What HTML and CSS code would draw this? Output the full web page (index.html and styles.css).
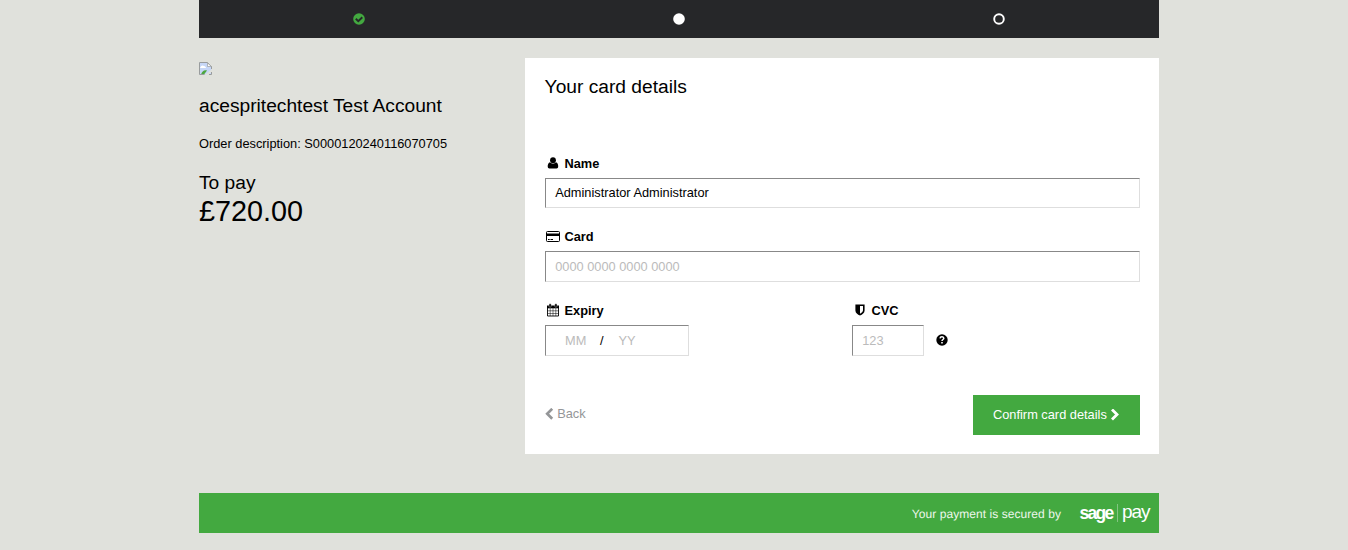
FILE: index.html
```html
<!DOCTYPE html>
<html lang="en">
<head>
<meta charset="utf-8">
<title>Your card details</title>
<link rel="stylesheet" href="styles.css">
</head>
<body>
<div class="page">
  <header class="steps">
    <div class="step"><svg class="dot" viewBox="0 0 12 12"><circle cx="6" cy="6" r="5.8" fill="#43a940"/><path d="M2.800 5.700 5.300 8.100 9.300 4.200" fill="none" stroke="#262729" stroke-width="1.9"/></svg></div>
    <div class="step"><svg class="dot" viewBox="0 0 12 12"><circle cx="6" cy="6" r="5.8" fill="#fff"/></svg></div>
    <div class="step"><svg class="dot" viewBox="0 0 12 12"><circle cx="6" cy="6" r="4.8" fill="none" stroke="#fff" stroke-width="1.9"/></svg></div>
  </header>
  <main class="content">
    <section class="order">
      <svg class="logo" viewBox="0 0 13 13"><path d="M.5 12.500V.5h8l4 4v8z" fill="#c6d6f6"/><path d="M1 6c1-3 3-3 4-2 1 0 2 1 2 2z" fill="#fff"/><path d="M2 12.500c1-3 3-5 6-4l-3 4z" fill="#4da63f"/><path d="M6 13 13 7V9.500l-3.500 3.500z" fill="#e0e1dc"/><path d="M.5 12.500V.5h8l4 4v2.500M.5 12.500h5M10 12.500h2.500v-2.500" fill="none" stroke="#999c9d"/><path d="M8.500 1v3.500h4z" fill="#fff" stroke="#999c9d" stroke-width=".7"/></svg>
      <h2 class="merchant">acespritechtest Test Account</h2>
      <p class="description">Order description: S0000120240116070705</p>
      <div class="pay-label">To pay</div>
      <div class="amount">£720.00</div>
    </section>
    <form class="card">
      <h1 class="title">Your card details</h1>
      <div class="field field-name">
        <label class="label"><svg class="icon" viewBox="0 0 16 14"><circle cx="8" cy="4.200" r="2.900"/><path d="M5 6.200C3.500 6.500 2.700 8.500 2.700 10.300c0 1.500.8 2.200 1.700 2.200h7.100c1 0 1.700-.7 1.700-2.200 0-1.800-.6-3.800-2.300-4.100C9.500 8 6.500 8 5 6.200z"/></svg>Name</label>
        <div class="input">Administrator Administrator</div>
      </div>
      <div class="field">
        <label class="label"><svg class="icon" viewBox="0 0 16 14"><rect x="1.500" y="2.500" width="13" height="10" rx=".9" fill="none" stroke="#000"/><path d="M1.500 4.500h13v2.500h-13z"/><path d="M3 10.500h1.700M5.500 10.500h2.500" stroke="#000"/></svg>Card</label>
        <div class="input input-number placeholder">0000 0000 0000 0000</div>
      </div>
      <div class="field-row">
        <div class="field">
          <label class="label"><svg class="icon" viewBox="0 0 16 14"><path d="M2 2.500h12v2.800H2z"/><path d="M2.500 3.500h11v9.500h-11z" fill="none" stroke="#000" stroke-width=".9"/><path d="M5.200 5v8M8 5v8M10.800 5v8M2.500 7.800h11M2.500 10.500h11" fill="none" stroke="#000" stroke-width=".5"/><rect x="4" y=".8" width="2.200" height="3.400" rx=".9" stroke="#fff" stroke-width=".35"/><rect x="9.800" y=".8" width="2.200" height="3.400" rx=".9" stroke="#fff" stroke-width=".35"/></svg>Expiry</label>
          <div class="input input-expiry"><span class="month placeholder">MM</span><span>/</span><span class="year placeholder">YY</span></div>
        </div>
        <div class="field">
          <label class="label"><svg class="icon" viewBox="0 0 16 14"><path fill-rule="evenodd" d="M3.400 1.400h9.200v6c0 2.400-2.200 4.100-4.600 5.200-2.400-1.100-4.600-2.800-4.600-5.200zM8 3v7.800c1.500-.9 3-2 3-3.500V3z"/></svg>CVC</label>
          <div class="cvc-line"><div class="input input-cvc placeholder">123</div><svg class="help" viewBox="0 0 12 12"><circle cx="6" cy="6" r="5.700"/><path d="M4 4.300C4.400 2.200 7.900 2.500 7.800 4.400 7.700 5.600 6 5.500 6 7.100" fill="none" stroke="#fff" stroke-width="1.500"/><path d="M5.200 8h1.600v1.500H5.200z" fill="#fff"/></svg></div>
        </div>
      </div>
      <div class="actions">
        <a class="back"><svg class="chevron" viewBox="0 0 10 12"><path d="M7.200.8 2.200 5.800l5 5" fill="none" stroke="currentColor" stroke-width="2.700"/></svg><span>Back</span></a>
        <div class="confirm"><span>Confirm card details</span><svg class="chevron" viewBox="0 0 10 12"><path d="M2 .5l5 5-5 5" fill="none" stroke="currentColor" stroke-width="2.800"/></svg></div>
      </div>
    </form>
  </main>
  <footer class="footer">
    <span class="secured">Your payment is secured by</span>
    <span class="sage">sage</span>
    <span class="pay">pay</span>
  </footer>
</div>
</body>
</html>
```

FILE: styles.css
```css
* { box-sizing: border-box; }
body {
  margin: 0;
  background: #e0e1dc;
  color: #000;
  font: 12.8px/18px "Liberation Sans", Arial, sans-serif;
}
.page { width: 960px; margin-left: 199px; }
.steps {
  display: grid;
  grid-template-columns: repeat(3, 1fr);
  height: 38px;
  background: #262729;
}
.step { display: flex; justify-content: center; padding-top: 13px; }
.dot { width: 12px; height: 12px; }
.content { display: flex; justify-content: space-between; padding-top: 20px; }
.order { padding-top: 4px; }
.logo { display: block; width: 13px; height: 13px; }
.merchant { margin: 19px 0 0; font-size: 19.2px; line-height: 24px; font-weight: 400; }
.description { margin: 17px 0 0; }
.pay-label { margin-top: 18px; font-size: 19.2px; line-height: 24px; }
.amount { font-size: 28.8px; line-height: 32px; }
.card { width: 634px; height: 396px; padding: 17px 19px 19px 20px; background: #fff; }
.title { margin: 0 0 54px -.4px; font-size: 19.2px; line-height: 24px; font-weight: 400; }
.field { height: 74px; }
.field-name { height: 73px; }
.label { display: flex; align-items: center; height: 22px; font-weight: 700; }
.icon { width: 16px; height: 14px; margin: 0 3.500px 2px 0; }
.input {
  height: 30px;
  margin-top: 3px;
  padding: 0 9.200px;
  border: 1px solid #dedede;
  border-top-color: #888;
  border-left-color: #888;
  line-height: 28px;
}
.input-number { height: 31px; line-height: 30px; }
.placeholder { color: #bbb; }
.field-row { display: grid; grid-template-columns: 307px 1fr; }
.input-expiry { display: flex; width: 144px; height: 31px; padding-left: 19px; line-height: 30px; }
.month { width: 35px; }
.year { margin-left: 15px; }
.cvc-line { display: flex; align-items: center; }
.input-cvc { width: 72px; height: 31px; line-height: 30px; }
.help { width: 12px; height: 12px; margin: 2px 0 0 12px; }
.actions { display: flex; justify-content: space-between; margin-top: 21px; }
.chevron { width: 10px; height: 12px; }
.back { display: flex; align-items: center; gap: 2.200px; height: 38px; color: #949698; }
.confirm {
  display: flex;
  align-items: center;
  gap: 3px;
  width: 167px;
  height: 40px;
  padding-left: 20px;
  background: #43a940;
  color: #fff;
}
.footer {
  display: flex;
  align-items: center;
  justify-content: flex-end;
  height: 40px;
  margin-top: 39px;
  padding-right: 10px;
  background: #43a940;
  color: #fff;
}
.secured { margin: 1px 18.500px 0 0; font-size: 12px; letter-spacing: .06px; color: #edf7ec; text-rendering: geometricPrecision; }
.sage { width: 37.500px; margin-top: -1px; font-size: 17.500px; font-weight: 700; line-height: 20px; letter-spacing: -1.700px; }
.pay {
  width: 32px;
  height: 18px;
  padding-left: 4px;
  border-left: 1px solid #83c581;
  font-size: 19px;
  line-height: 16px;
  letter-spacing: -1.100px;
}
```
